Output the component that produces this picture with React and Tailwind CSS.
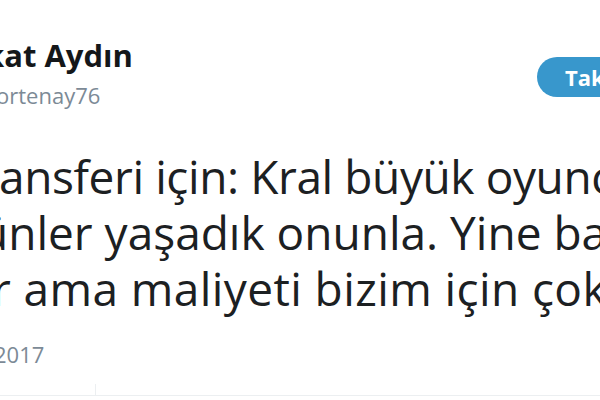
export default function App() {
  return (
    <div
      className="relative w-[600px] h-[400px] overflow-hidden bg-white text-[#14171a]"
      style={{ fontFamily: '"Open Sans", "Noto Sans", sans-serif' }}
    >
      <div className="flex items-start justify-between pt-[40px] whitespace-nowrap">
        <div className="flex flex-col">
          <div className="ml-[-15px] text-[31px] leading-[31px] font-bold">kat Aydın</div>
          <div className="ml-[-4px] mt-[13px] text-[22px] leading-[22px] text-[#7c8a96]">ortenay76</div>
        </div>
        <div className="mt-[17px] mr-[-50px] flex h-[40px] w-[113px] items-center rounded-full bg-[#3897cc] pl-[28px] text-[22px] font-bold text-white">
          Takip Et
        </div>
      </div>
      <div className="mt-[42px] whitespace-nowrap text-[46px] leading-[56px] text-[#1c2022]">
        <div className="ml-[-1px] tracking-[-0.4px]">ansferi için: Kral büyük oyuncu</div>
        <div className="ml-[-20px]">ünler yaşadık onunla. Yine başarılar</div>
        <div className="ml-[-8px] tracking-[0.4px]">r ama maliyeti bizim için çok</div>
      </div>
      <div className="mt-[27px] ml-[-6px] whitespace-nowrap text-[22px] leading-[22px] text-[#7c8a96]">2017</div>
      <div className="absolute left-0 right-0 top-[395px] h-px bg-[#eceff1]" />
      <div className="absolute left-[95px] top-[384px] h-[11px] w-px bg-[#eceff1]" />
    </div>
  );
}
